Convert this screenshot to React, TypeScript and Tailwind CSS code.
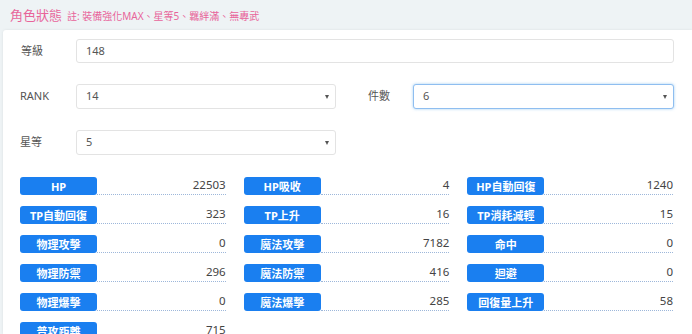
import { useState } from 'react';

const stats: [string, string][] = [
  ['HP', '22503'],
  ['HP吸收', '4'],
  ['HP自動回復', '1240'],
  ['TP自動回復', '323'],
  ['TP上升', '16'],
  ['TP消耗減輕', '15'],
  ['物理攻擊', '0'],
  ['魔法攻擊', '7182'],
  ['命中', '0'],
  ['物理防禦', '296'],
  ['魔法防禦', '416'],
  ['迴避', '0'],
  ['物理爆擊', '0'],
  ['魔法爆擊', '285'],
  ['回復量上升', '58'],
  ['普攻距離', '715'],
];

function Select({ value, focused, className }: { value: string; focused?: boolean; className: string }) {
  return (
    <div
      className={`h-[25px] flex items-center justify-between pl-[9px] pr-[6px] rounded-[3px] bg-white text-[11px] text-[#555] ${
        focused ? 'border border-[#8fbef0] shadow-[0_0_3px_rgba(102,175,233,0.6)]' : 'border border-[#e3e3e3]'
      } ${className}`}
    >
      <span>{value}</span>
      {/* tiny caret */}
      <span className="w-0 h-0 border-x-[2.5px] border-x-transparent border-t-[4px] border-t-[#555]" />
    </div>
  );
}

export default function App() {
  const [level] = useState('148');

  return (
    <div className="w-[692px] h-[334px] overflow-hidden bg-[#eef3f5] font-['Noto_Sans','Noto_Sans_CJK_TC',sans-serif]">
      {/* page title */}
      <div className="h-[30px] flex items-center pl-[10px] gap-[5px]">
        <span className="text-[13px] text-[#e8649a] leading-none">角色狀態</span>
        <span className="text-[10px] text-[#e8649a] leading-none pt-[2px]">註: 裝備強化MAX、星等5、羈絆滿、無專武</span>
      </div>

      <div className="ml-[3px] h-[304px] bg-white rounded-tl-[3px] shadow-[0_0_3px_rgba(0,0,0,0.08)] pt-[9px] pl-[17px] pr-[18px] text-[11px] text-[#555]">
        {/* 等級 */}
        <div className="flex items-center h-[24px]">
          <span className="w-[56px] pl-[1px]">等級</span>
          <div className="flex-1 h-[24px] flex items-center pl-[9px] border border-[#e3e3e3] rounded-[3px]">{level}</div>
        </div>

        {/* RANK / 件數 */}
        <div className="flex items-center mt-[21px]">
          <span className="w-[56px]">RANK</span>
          <Select value="14" className="w-[260px]" />
          <span className="ml-[32px] w-[45px]">件數</span>
          <Select value="6" focused className="flex-1" />
        </div>

        {/* 星等 */}
        <div className="flex items-center mt-[21px]">
          <span className="w-[56px]">星等</span>
          <Select value="5" className="w-[260px]" />
        </div>

        {/* stats */}
        <div className="grid grid-cols-3 gap-x-[18px] gap-y-[11px] mt-[22px] mr-[1px]">
          {stats.map(([name, val]) => (
            <div key={name} className="flex items-end h-[18px]">
              <div className="w-[77px] h-[18px] shrink-0 rounded-[3px] bg-[#1a7ff0] text-white text-[11px] font-bold flex items-center justify-center leading-none">
                {name}
              </div>
              <div
                className={`flex-1 h-[18px] text-right text-[11.5px] text-[#444] leading-[16px] ${
                  name === '普攻距離' ? '' : 'border-b border-dotted border-[#9db7da]'
                }`}
              >
                {val}
              </div>
            </div>
          ))}
        </div>
      </div>
    </div>
  );
}
